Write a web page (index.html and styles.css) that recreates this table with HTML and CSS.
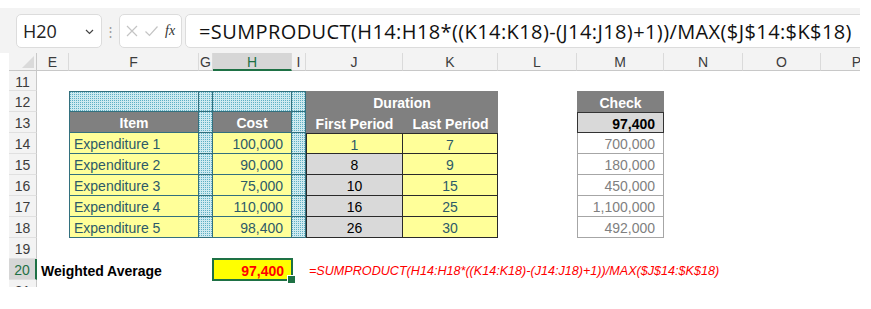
FILE: index.html
```html
<!DOCTYPE html>
<html lang="en">
<head>
<meta charset="utf-8">
<title>Weighted Average</title>
<link rel="stylesheet" href="styles.css">
</head>
<body>
<div class="app">
  <div class="formula-bar">
    <div class="name-box">
      <span class="name">H20</span>
      <svg class="chev" width="9" height="6" viewBox="0 0 9 6"><path d="M1 1l3.5 3.5L8 1" fill="none" stroke="#444" stroke-width="1.2"/></svg>
    </div>
    <span class="grip">⋮</span>
    <div class="fx-box">
      <svg class="fx-icon" width="14" height="14" viewBox="0 0 14 14"><path d="M2 2l10 10M12 2L2 12" fill="none" stroke="#c4c4c4" stroke-width="1.2"/></svg>
      <svg class="fx-icon" width="15" height="14" viewBox="0 0 15 14"><path d="M1.5 7.5l4 4L13.5 2.5" fill="none" stroke="#c4c4c4" stroke-width="1.2"/></svg>
      <span class="fx">fx</span>
    </div>
    <div class="formula-input">=SUMPRODUCT(H14:H18*((K14:K18)-(J14:J18)+1))/MAX($J$14:$K$18)</div>
  </div>

  <div class="sheet">
    <!-- column headers -->
    <div class="corner"><span class="select-all"></span></div>
    <div class="colhdr cE">E</div>
    <div class="colhdr cF">F</div>
    <div class="colhdr cG">G</div>
    <div class="colhdr cH active">H</div>
    <div class="colhdr cI">I</div>
    <div class="colhdr cJ">J</div>
    <div class="colhdr cK">K</div>
    <div class="colhdr cL">L</div>
    <div class="colhdr cM">M</div>
    <div class="colhdr cN">N</div>
    <div class="colhdr cO">O</div>
    <div class="colhdr cP">P</div>

    <!-- row headers -->
    <div class="rowhdr r11">11</div>
    <div class="rowhdr r12">12</div>
    <div class="rowhdr r13">13</div>
    <div class="rowhdr r14">14</div>
    <div class="rowhdr r15">15</div>
    <div class="rowhdr r16">16</div>
    <div class="rowhdr r17">17</div>
    <div class="rowhdr r18">18</div>
    <div class="rowhdr r19">19</div>
    <div class="rowhdr r20 active">20</div>
    <div class="rowhdr r21">21</div>

    <!-- cost table: F:I -->
    <div class="cell hatch tb top left cF r12"></div>
    <div class="cell hatch tb top cG r12"></div>
    <div class="cell hatch tb top cH r12"></div>
    <div class="cell hatch tb top cI r12"></div>

    <div class="cell head tb left cF r13">Item</div>
    <div class="cell hatch tb cG r13"></div>
    <div class="cell head tb cH r13">Cost</div>
    <div class="cell hatch tb cI r13"></div>

    <div class="cell input tb left cF r14">Expenditure 1</div>
    <div class="cell hatch tb cG r14"></div>
    <div class="cell input num tb cH r14">100,000</div>
    <div class="cell hatch tb cI r14"></div>

    <div class="cell input tb left cF r15">Expenditure 2</div>
    <div class="cell hatch tb cG r15"></div>
    <div class="cell input num tb cH r15">90,000</div>
    <div class="cell hatch tb cI r15"></div>

    <div class="cell input tb left cF r16">Expenditure 3</div>
    <div class="cell hatch tb cG r16"></div>
    <div class="cell input num tb cH r16">75,000</div>
    <div class="cell hatch tb cI r16"></div>

    <div class="cell input tb left cF r17">Expenditure 4</div>
    <div class="cell hatch tb cG r17"></div>
    <div class="cell input num tb cH r17">110,000</div>
    <div class="cell hatch tb cI r17"></div>

    <div class="cell input tb left cF r18">Expenditure 5</div>
    <div class="cell hatch tb cG r18"></div>
    <div class="cell input num tb cH r18">98,400</div>
    <div class="cell hatch tb cI r18"></div>

    <!-- duration table: J:K -->
    <div class="cell head ctr span-jk r12">Duration</div>
    <div class="cell head ctr cJ r13">First Period</div>
    <div class="cell head ctr cK r13">Last Period</div>

    <div class="cell input ctr db top cJ r14">1</div>
    <div class="cell input ctr db top cK r14">7</div>
    <div class="cell calc ctr db cJ r15">8</div>
    <div class="cell input ctr db cK r15">9</div>
    <div class="cell calc ctr db cJ r16">10</div>
    <div class="cell input ctr db cK r16">15</div>
    <div class="cell calc ctr db cJ r17">16</div>
    <div class="cell input ctr db cK r17">25</div>
    <div class="cell calc ctr db cJ r18">26</div>
    <div class="cell input ctr db cK r18">30</div>

    <!-- check column: M -->
    <div class="cell head ctr cM r12">Check</div>
    <div class="cell total num cM r13">97,400</div>
    <div class="cell check num cM r14">700,000</div>
    <div class="cell check num cM r15">180,000</div>
    <div class="cell check num cM r16">450,000</div>
    <div class="cell check num cM r17">1,100,000</div>
    <div class="cell check num cM r18">492,000</div>

    <!-- result row -->
    <div class="cell label span-ef r20">Weighted Average</div>
    <div class="cell result num cH r20">97,400</div>
    <div class="cell note span-jo r20">=SUMPRODUCT(H14:H18*((K14:K18)-(J14:J18)+1))/MAX($J$14:$K$18)</div>
  </div>
</div>
</body>
</html>
```

FILE: styles.css
```css
* { box-sizing: border-box; }

html, body {
  margin: 0;
  padding: 0;
  background: #ffffff;
}

.app {
  width: 860px;
  margin-top: 8px;
  overflow: hidden;
  font-family: "Liberation Sans", Arial, sans-serif;
}

/* ---------- formula bar ---------- */
.formula-bar {
  height: 45px;
  background: #f3f3f3;
  display: flex;
  align-items: center;
  padding-left: 16px;
  padding-top: 1px;
}

.name-box {
  flex: none;
  width: 86px;
  height: 34px;
  background: #ffffff;
  border: 1px solid #dcdcdc;
  border-radius: 5px;
  display: flex;
  align-items: center;
  justify-content: space-between;
  padding: 0 7px 0 6px;
}

.name {
  font-family: "Open Sans", "Noto Sans", sans-serif;
  font-size: 18px;
  color: #222;
}

.chev { margin-top: 1px; }

.grip {
  flex: none;
  width: 17px;
  text-align: center;
  color: #9a9a9a;
  font-size: 13px;
}

.fx-box {
  flex: none;
  width: 63px;
  height: 34px;
  background: #ffffff;
  border: 1px solid #dcdcdc;
  border-radius: 5px;
  display: flex;
  align-items: center;
  gap: 5px;
  padding-left: 5px;
}

.fx-icon { flex: none; }

.fx {
  font-family: "Liberation Serif", "Times New Roman", serif;
  font-style: italic;
  font-size: 14px;
  color: #333;
  margin-left: 1px;
}

.formula-input {
  flex: none;
  width: 700px;
  height: 34px;
  margin-left: 3px;
  background: #ffffff;
  border: 1px solid #dcdcdc;
  border-radius: 5px;
  display: flex;
  align-items: center;
  padding-left: 13px;
  font-family: "Open Sans", "Noto Sans", sans-serif;
  font-size: 20px;
  letter-spacing: 0.4px;
  color: #111;
  white-space: nowrap;
}

/* ---------- sheet grid ---------- */
.sheet {
  margin-left: 9px;
  height: 234px;
  overflow: hidden;
  display: grid;
  grid-template-columns: 28px 32px 130px 14px 79px 14px 97px 95px 79px 87px 79px 78px 72px;
  grid-template-rows: 18px 20px repeat(10, 21px);
  font-size: 14px;
  background: #ffffff;
}

.corner {
  grid-column: 1;
  grid-row: 1;
  background: #f3f3f3;
  border-right: 1px solid #c8c8c8;
  border-bottom: 1px solid #c8c8c8;
  position: relative;
}

.select-all {
  position: absolute;
  right: 2px;
  bottom: 2px;
  width: 0;
  height: 0;
  border-left: 12px solid transparent;
  border-bottom: 12px solid #dadada;
}

.colhdr {
  grid-row: 1;
  background: #f3f3f3;
  border-right: 1px solid #dadada;
  border-bottom: 1px solid #c8c8c8;
  display: flex;
  align-items: center;
  justify-content: center;
  color: #3c3c3c;
  font-size: 14px;
  padding-top: 1px;
}

.colhdr.active {
  background: #d6d6d6;
  color: #1e7145;
  border-bottom: 2px solid #1e7145;
}

.rowhdr {
  grid-column: 1;
  background: #f3f3f3;
  border-right: 1px solid #c8c8c8;
  border-bottom: 1px solid #e0e0e0;
  display: flex;
  align-items: center;
  justify-content: center;
  color: #3c3c3c;
  font-size: 14px;
  padding-top: 2px;
}

.rowhdr.active {
  background: #d6d6d6;
  color: #1e7145;
  border-right: 2px solid #1e7145;
}

/* grid columns */
.cE { grid-column: 2; }
.cF { grid-column: 3; }
.cG { grid-column: 4; }
.cH { grid-column: 5; }
.cI { grid-column: 6; }
.cJ { grid-column: 7; }
.cK { grid-column: 8; }
.cL { grid-column: 9; }
.cM { grid-column: 10; }
.cN { grid-column: 11; }
.cO { grid-column: 12; }
.cP { grid-column: 13; }
.span-jk { grid-column: 7 / span 2; }
.span-ef { grid-column: 2 / span 2; }
.span-jo { grid-column: 7 / span 7; }

/* grid rows */
.r11 { grid-row: 2; }
.r12 { grid-row: 3; }
.r13 { grid-row: 4; }
.r14 { grid-row: 5; }
.r15 { grid-row: 6; }
.r16 { grid-row: 7; }
.r17 { grid-row: 8; }
.r18 { grid-row: 9; }
.r19 { grid-row: 10; }
.r20 { grid-row: 11; }
.r21 { grid-row: 12; }

/* ---------- cells ---------- */
.cell {
  display: flex;
  align-items: center;
  padding: 2px 4px 0 4px;
  white-space: nowrap;
  font-size: 14px;
  color: #000;
}

.ctr { justify-content: center; }
.num { justify-content: flex-end; padding-right: 8px; }

/* dotted pattern fill: light stripes on every other row and column
   leave one dark dot per 2x2 tile */
.hatch {
  background-color: #5eb0c4;
  background-image:
    linear-gradient(to bottom, transparent 1px, #cfeaf0 1px),
    linear-gradient(to right, transparent 1px, #cfeaf0 1px);
  background-size: 2px 2px;
}

.head {
  background: #808080;
  color: #ffffff;
  font-weight: bold;
  justify-content: center;
}

.input {
  background: #ffff99;
  color: #2d5a68;
}

.calc {
  background: #d9d9d9;
  color: #000;
}

/* teal bordered block */
.tb {
  border-right: 1px solid #33707e;
  border-bottom: 1px solid #33707e;
}
.tb.top { border-top: 1px solid #33707e; }
.tb.left { border-left: 1px solid #33707e; }

/* dark bordered block */
.db {
  border-right: 1px solid #2a2a2a;
  border-bottom: 1px solid #2a2a2a;
}
.db.top { border-top: 1px solid #2a2a2a; }
.db.cJ { border-left: 1px solid #2a2a2a; }

.total {
  background: #d9d9d9;
  font-weight: bold;
  border: 1px solid #333;
}

.check {
  background: #ffffff;
  color: #7f7f7f;
  border-left: 1px solid #a6a6a6;
  border-right: 1px solid #a6a6a6;
  border-bottom: 1px solid #a6a6a6;
}

.label {
  font-weight: bold;
  padding-left: 4px;
}

.result {
  position: relative;
  background: #ffff00;
  color: #ff0000;
  font-weight: bold;
  outline: 2px solid #1e7145;
  outline-offset: -1px;
}

.result::after {
  content: "";
  position: absolute;
  right: -4px;
  bottom: -4px;
  width: 7px;
  height: 7px;
  background: #1e7145;
  border: 1px solid #ffffff;
}

.note {
  color: #ff0000;
  font-style: italic;
  font-size: 12.6px;
  padding-left: 3px;
}
```
